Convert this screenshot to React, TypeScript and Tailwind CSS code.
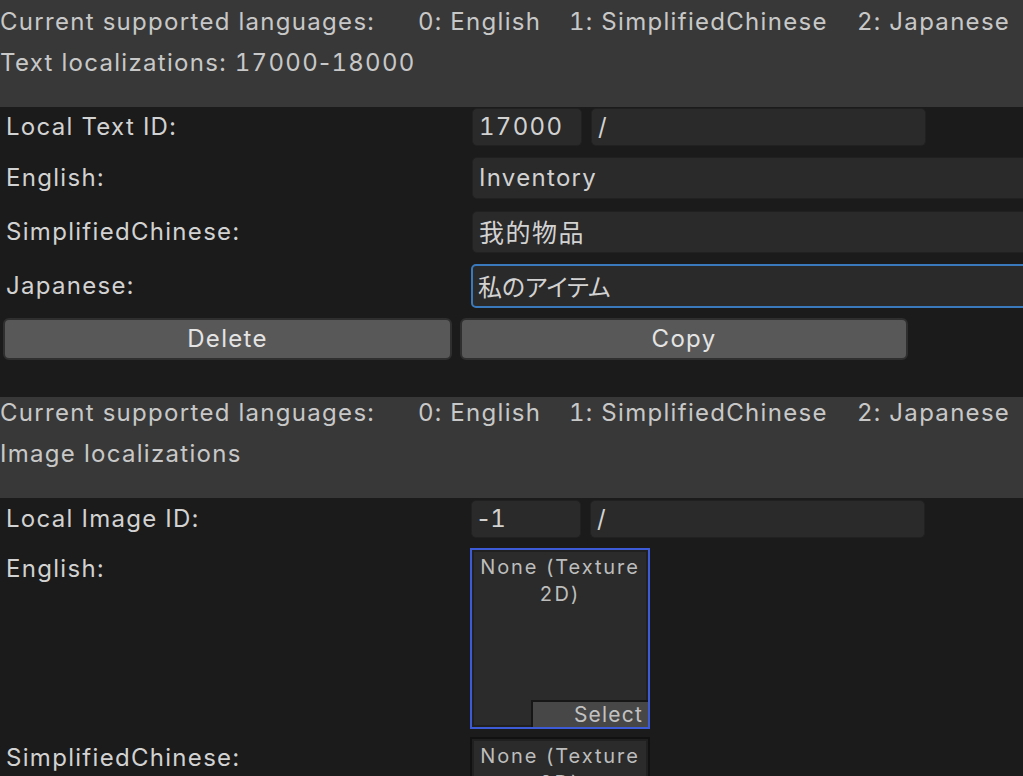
import React from "react";

const FONT = "font-['Inter','Noto_Sans_CJK_SC',sans-serif] tracking-[1.3px] tabular-nums";

function Dash() {
  return <span className="[font-variant-numeric:normal]">-</span>;
}

function Header({ h, title }: { h: string; title: React.ReactNode }) {
  return (
    <div className={`${h} bg-[#383838] flex flex-col justify-end pb-[24px] text-[24px] leading-[41px] text-[#c8c8c8] whitespace-nowrap`}>
      <div className="flex">
        <span className="w-[418px]">Current supported languages:</span>
        <span className="w-[151px]">0: English</span>
        <span className="w-[288px]">1: SimplifiedChinese</span>
        <span>2: Japanese</span>
      </div>
      <div>{title}</div>
    </div>
  );
}

function Label({ children }: { children: React.ReactNode }) {
  return (
    <div className="w-[471px] shrink-0 pl-[6px] text-[24px] text-[#d2d2d2] whitespace-nowrap">{children}</div>
  );
}

function Field({ children, w, focus, cjk }: { children?: React.ReactNode; w: string; focus?: boolean; cjk?: string }) {
  return (
    <div
      className={`${w} h-full shrink-0 rounded-[5px] bg-[#2a2a2a] flex items-center px-[6px] text-[24px] text-[#d2d2d2] whitespace-nowrap ${
        focus ? "border-2 border-[#3a79bb] pl-[5px]" : "border border-[#212121] border-t-[#202020]"
      } ${cjk ?? ""}`}
    >
      {children}
    </div>
  );
}

function TextureBox({ selected }: { selected?: boolean }) {
  return (
    <div
      className={`relative w-[180px] h-[181px] shrink-0 ${
        selected ? "border-2 border-[#3d5bd6]" : "border-2 border-[#111111]"
      }`}
    >
      <div className="w-full h-full border-2 border-[#202020] bg-[#2b2b2b] text-center text-[20px] leading-[27px] tracking-[1.9px] text-[#bdbdbd] pt-[2px] overflow-hidden">
        None (Texture
        <br />
        2D)
      </div>
      {selected && (
        <div className="absolute right-0 bottom-0 w-[117px] h-[27px] bg-[#474747] border-t-2 border-l-2 border-[#161616] text-right pr-[5px] text-[21px] leading-[25px] tracking-[1.2px] text-[#c2c2c2]">
          Select
        </div>
      )}
    </div>
  );
}

export default function App() {
  return (
    <div className={`w-[1023px] h-[776px] overflow-hidden bg-[#1b1b1b] ${FONT}`}>
      <Header
        h="h-[107px]"
        title={
          <>
            Text localizations: 17000
            <Dash />
            18000
          </>
        }
      />

      <div className="flex items-center h-[38px] mt-[1px]">
        <Label>Local Text ID:</Label>
        <div className="flex h-full gap-[9px] pl-[1px]">
          <Field w="w-[110px]">17000</Field>
          <Field w="w-[335px]">/</Field>
        </div>
      </div>

      <div className="flex items-center h-[42px] mt-[11px]">
        <Label>English:</Label>
        <div className="flex h-full pl-[1px]">
          <Field w="w-[560px]">Inventory</Field>
        </div>
      </div>

      <div className="flex items-center h-[42px] mt-[12px]">
        <Label>SimplifiedChinese:</Label>
        <div className="flex h-full pl-[1px]">
          <Field w="w-[560px]" cjk="font-['Noto_Sans_CJK_SC',sans-serif] text-[25px] tracking-[1.5px]">我的物品</Field>
        </div>
      </div>

      <div className="flex items-center h-[44px] mt-[11px]">
        <Label>Japanese:</Label>
        <div className="flex h-full">
          <Field w="w-[560px]" focus cjk="font-['Noto_Sans_CJK_JP',sans-serif] tracking-[0px] [font-feature-settings:'palt']">私のアイテム</Field>
        </div>
      </div>

      <div className="flex gap-[8px] h-[42px] mt-[10px] pl-[3px]">
        <button className="w-[449px] h-full rounded-[6px] bg-[#585858] border-2 border-[#2f2f2f] text-[24px] text-[#e4e4e4]">
          Delete
        </button>
        <button className="w-[448px] h-full rounded-[6px] bg-[#585858] border-2 border-[#2f2f2f] text-[24px] text-[#e4e4e4]">
          Copy
        </button>
      </div>

      <div className="mt-[37px]">
        <Header h="h-[101px]" title="Image localizations" />
      </div>

      <div className="flex items-center h-[38px] mt-[2px]">
        <Label>Local Image ID:</Label>
        <div className="flex h-full gap-[9px]">
          <Field w="w-[110px]">
            <Dash />1
          </Field>
          <Field w="w-[335px]">/</Field>
        </div>
      </div>

      <div className="flex items-start mt-[10px]">
        <div className="leading-[42px]">
          <Label>English:</Label>
        </div>
        <div className="-ml-[1px]">
          <TextureBox selected />
        </div>
      </div>

      <div className="flex items-start mt-[8px]">
        <div className="leading-[42px]">
          <Label>SimplifiedChinese:</Label>
        </div>
        <div className="-ml-[1px]">
          <TextureBox />
        </div>
      </div>
    </div>
  );
}
